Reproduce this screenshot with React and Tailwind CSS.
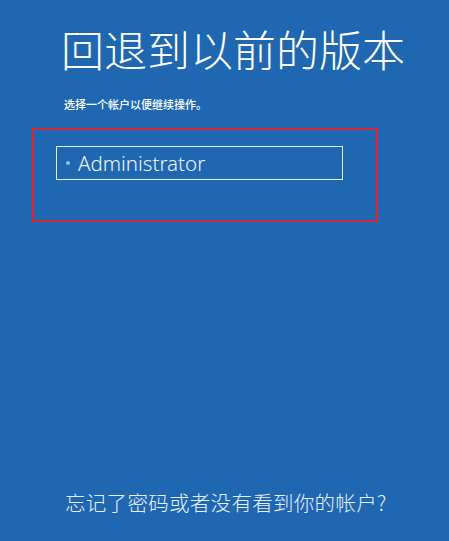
import React from 'react';

const cjk = { fontFamily: '"Noto Sans CJK SC", "Noto Sans", sans-serif' };

function App() {
  return (
    <div className="w-[449px] h-[541px] bg-[#2067b1] text-white flex flex-col overflow-hidden" style={cjk}>
      {/* Title */}
      <h1 className="mt-[21px] ml-[61px] text-[43px] leading-[54px] font-light whitespace-nowrap">
        回退到以前的版本
      </h1>
      <p className="mt-[22px] ml-[64px] text-[11px] leading-[14px] font-medium whitespace-nowrap">
        选择一个帐户以便继续操作。
      </p>

      {/* Account list, highlighted */}
      <div className="mt-[17px] ml-[32px] w-[346px] h-[94px] border-2 border-[#d0293f] pt-[16px] pl-[22px]">
        <div className="w-[287px] h-[34px] border border-[#e8eef7] flex items-center pl-[9px]">
          <span className="w-[4px] h-[4px] rounded-full bg-[#8cc0ee] mr-[8px]" />
          <span className="text-[20.5px] leading-none font-light text-[#eef3fa]" style={{ fontFamily: '"Noto Sans", "Open Sans", sans-serif' }}>
            Administrator
          </span>
        </div>
      </div>

      <div className="flex-1" />

      <p className="mb-[26px] ml-[65px] text-[20.5px] leading-[26px] font-light tracking-[0.3px] text-[#e9eff8] whitespace-nowrap">
        忘记了密码或者没有看到你的帐户?
      </p>
    </div>
  );
}

export default App;
